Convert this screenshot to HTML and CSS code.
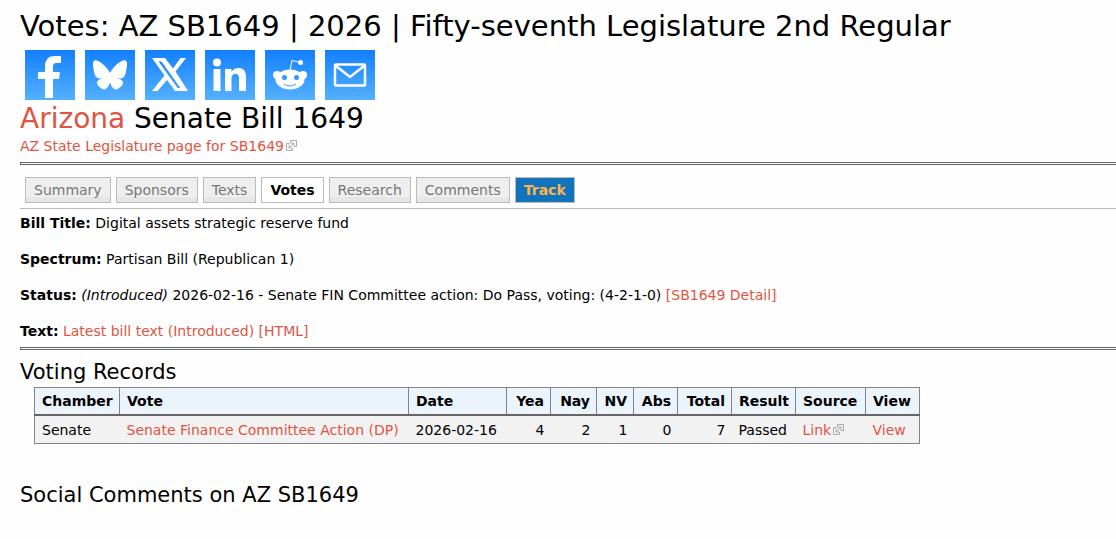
FILE: index.html
```html
<!DOCTYPE html>
<html lang="en">
<head>
<meta charset="utf-8">
<title>Votes: AZ SB1649</title>
<link rel="stylesheet" href="styles.css">
</head>
<body>
<svg class="defs" aria-hidden="true">
  <symbol id="external" viewBox="0 0 11 11">
    <path d="M4.500 3V.5h6v6H8M3.500 3.500h-3v7h6V8M8 3L3 8M3 4.500V8h3.500M4.500 3H8v3.500" fill="none" stroke="#aaa"/>
  </symbol>
</svg>
<main class="page">
  <h1 class="title">Votes: AZ SB1649 | 2026 | Fifty-seventh Legislature 2nd Regular</h1>
  <nav class="share" aria-label="Share">
    <a href="#" aria-label="Facebook"><svg viewBox="0 0 50 50"><path d="M20 48V29h-7v-7h7v-5C20 9 24 6 30 6h6v7h-4c-3 0-4 1-4 4v5h7l-1 7h-6v19z"/></svg></a>
    <a href="#" aria-label="Bluesky"><svg viewBox="0 0 50 50"><path d="M25 23C22 17 16 12 12 10.500C9 9.500 8 11 8 14c0 2 1 9 2 11c1 3 4 4 8 3.500c-6 1-8 4-4 8c5 5 8 4 11-4c3 8 6 9 11 4c4-4 2-7-4-8c4 .5 7-.5 8-3.500c1-2 2-9 2-11c0-3-1-4.500-4-3.500C34 12 28 17 25 23z"/></svg></a>
    <a href="#" aria-label="X"><svg viewBox="0 0 50 50"><path fill-rule="evenodd" d="M7 8h13l8 10.500L35.500 8H41L30.500 21.500 43 41H30l-8-11L12.500 41H7l12.500-15.500zM13.500 11.500l19 26.500h3L16.500 11.500z"/></svg></a>
    <a href="#" aria-label="LinkedIn"><svg viewBox="0 0 50 50"><circle cx="12" cy="12.500" r="4"/><path d="M8.500 19H15.500V41H8.500zM20 19h6.500v3c2-3 4-4 7-4c6 0 7.500 4 7.500 10v13h-7V29c0-3-.5-5-3.500-5s-4 2-4 5v12H20z"/></svg></a>
    <a href="#" aria-label="Reddit"><svg viewBox="0 0 50 50"><path d="M25 20l2-9.500 8 2" fill="none" stroke="#fff" stroke-width="1"/><circle cx="35.500" cy="12.500" r="2.500"/><circle cx="12" cy="25" r="4"/><circle cx="38" cy="25" r="4"/><ellipse cx="25" cy="29.500" rx="14.500" ry="10"/><g class="hole"><circle cx="19.500" cy="27.500" r="2.500"/><circle cx="31.500" cy="27.500" r="2.500"/></g><path d="M19 34q6 4 12 0" fill="none" stroke="#3c9dff" stroke-width="1"/></svg></a>
    <a href="#" aria-label="Email"><svg viewBox="0 0 50 50"><rect x="10" y="14.500" width="30" height="21" rx="1" fill="none" stroke="#fff" stroke-width="2.500"/><path d="M11 16l14 11 14-11" fill="none" stroke="#fff" stroke-width="2.500"/></svg></a>
  </nav>
  <h2 class="bill"><a href="#">Arizona</a> Senate Bill 1649</h2>
  <p class="line"><a href="#">AZ State Legislature page for SB1649<svg class="ext"><use href="#external"/></svg></a></p>
  <hr class="rule">
  <nav class="tabs" aria-label="Bill">
    <a href="#">Summary</a>
    <a href="#">Sponsors</a>
    <a href="#">Texts</a>
    <a href="#" class="current" aria-current="page">Votes</a>
    <a href="#">Research</a>
    <a href="#">Comments</a>
    <a href="#" class="track">Track</a>
  </nav>
  <section class="details">
    <p class="line"><b>Bill Title:</b> Digital assets strategic reserve fund</p>
    <p class="line"><b>Spectrum:</b> Partisan Bill (Republican 1)</p>
    <p class="line"><b>Status:</b> <i>(Introduced)</i> 2026-02-16 - Senate FIN Committee action: Do Pass, voting: (4-2-1-0) <a href="#">[SB1649 Detail]</a></p>
    <p class="line"><b>Text:</b> <a href="#">Latest bill text (Introduced) [HTML]</a></p>
  </section>
  <hr class="rule">
  <h3 class="section-title">Voting Records</h3>
  <table class="votes">
    <colgroup><col class="w-chamber"><col class="w-vote"><col class="w-date"><col class="w-yea"><col class="w-nay"><col class="w-nv"><col class="w-abs"><col class="w-total"><col class="w-result"><col class="w-source"><col class="w-view"></colgroup>
    <thead><tr><th>Chamber</th><th>Vote</th><th>Date</th><th class="num">Yea</th><th class="num">Nay</th><th class="num">NV</th><th class="num">Abs</th><th class="num">Total</th><th>Result</th><th>Source</th><th>View</th></tr></thead>
    <tbody><tr><td>Senate</td><td><a href="#">Senate Finance Committee Action (DP)</a></td><td>2026-02-16</td><td class="num">4</td><td class="num">2</td><td class="num">1</td><td class="num">0</td><td class="num">7</td><td>Passed</td><td><a href="#">Link<svg class="ext"><use href="#external"/></svg></a></td><td><a href="#">View</a></td></tr></tbody>
  </table>
  <h3 class="section-title">Social Comments on AZ SB1649</h3>
</main>
</body>
</html>
```
FILE: styles.css
```css
body { margin: 0; background: #fefefe; color: #000; font: 14px/18px Verdana, "DejaVu Sans", sans-serif; }
a { color: #e05443; text-decoration: none; }
h1, h2, h3, p { margin: 0; font-weight: normal; }
.defs { display: none; }
.page { padding: 8px 0 28px 20px; }
.title { padding-bottom: 6px; font-size: 29px; line-height: 36px; }
.share { display: flex; gap: 10px; padding-left: 5px; }
.share a { height: 50px; width: 50px; background: linear-gradient(#127fff, #55b1ff); }
.share svg { display: block; fill: #fff; }
.share .hole { fill: #3295ff; }
.bill { padding-top: 1px; font-size: 28px; line-height: 36px; }
.line { white-space: nowrap; }
.ext { width: 11px; height: 11px; margin-left: 2px; }
.rule { margin: 7px 0; height: 1px; border: solid #666; border-width: 1px 0 1px 1px; }
.tabs { display: flex; gap: 5px; padding: 5px 0 5px 5px; border-bottom: 1px solid #bbb; }
.rule + .tabs { margin-top: 12px; padding-top: 0; }
.tabs a { padding: 4px 8px 3px; border: 1px solid #bbb; background: linear-gradient(#eee 80%, #e6e6e6 80%); color: #777; line-height: 17px; }
.tabs .current { background: #fff; color: #000; font-weight: bold; }
.tabs .track { background: #1073bc; color: #ffb347; font-weight: bold; }
.details { display: grid; gap: 18px; padding-top: 5px; }
.section-title { font-size: 21px; line-height: 30px; }
.votes { margin: 0 0 36px 14px; border-collapse: collapse; table-layout: fixed; width: 886px; }
.votes th, .votes td { padding: 4px 7px; text-align: left; white-space: nowrap; }
.votes th { border: 1px solid #808488; border-bottom: 2px solid #666; background: #ebf3fb; }
.votes td { padding: 5px 7px 4px; background: #f2f2f2; }
.votes tbody { border: 1px solid #808488; }
.votes .num { text-align: right; padding-right: 6px; }
.w-chamber { width: 85px; }
.w-vote { width: 289px; }
.w-date { width: 98px; }
.w-yea { width: 44px; }
.w-nay { width: 46px; }
.w-nv { width: 37px; }
.w-abs { width: 44px; }
.w-total { width: 54px; }
.w-result { width: 64px; }
.w-source { width: 70px; }
.w-view { width: 54px; }
```
